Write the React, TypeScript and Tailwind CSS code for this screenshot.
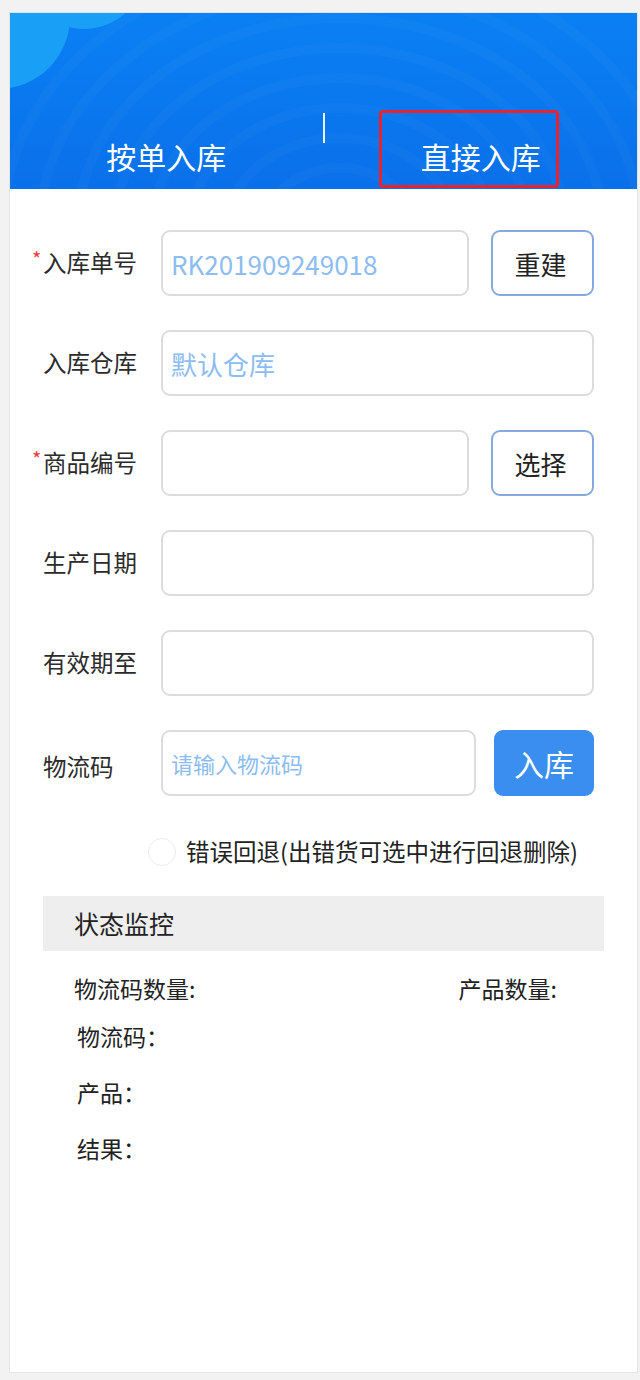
import React from "react";

const font = { fontFamily: '"Noto Sans CJK SC", "Noto Sans", sans-serif' };

type Row = {
  label: string;
  required?: boolean;
  value?: string;
  placeholder?: string;
  button?: string;
};

const rows: Row[] = [
  { label: "入库单号", required: true, value: "RK201909249018", button: "重建" },
  { label: "入库仓库", value: "默认仓库" },
  { label: "商品编号", required: true, button: "选择" },
  { label: "生产日期" },
  { label: "有效期至" },
];

function HeaderArt() {
  return (
    <svg className="absolute inset-0 h-full w-full" viewBox="0 0 627 176" preserveAspectRatio="none" aria-hidden>
      <defs>
        <linearGradient id="hdr" x1="0" y1="0" x2="0" y2="1">
          <stop offset="0" stopColor="#0a80f3" />
          <stop offset="1" stopColor="#0a70ea" />
        </linearGradient>
      </defs>
      <rect width="627" height="176" fill="url(#hdr)" />
      {[60, 90, 120, 150, 180, 210, 240, 270].map((r) => (
        <ellipse
          key={r}
          cx="330"
          cy="215"
          rx={r * 1.25}
          ry={r}
          fill="none"
          stroke="#ffffff"
          strokeOpacity="0.025"
          strokeWidth="10"
        />
      ))}
      <circle cx="-12" cy="4" r="72" fill="#1a9ff7" />
      <circle cx="74" cy="-46" r="62" fill="#1a9ff7" />
    </svg>
  );
}

export default function App() {
  return (
    <div className="min-h-screen bg-[#f2f2f2] pb-[7px] pl-[9px] pt-[12px]" style={font}>
      <div className="flex h-[1361px] w-[629px] flex-col border border-[#e4e4e4] bg-white">
        <header className="relative h-[176px] shrink-0 overflow-hidden">
          <HeaderArt />
          <div className="absolute left-[313px] top-[100px] h-[30px] w-[2px] bg-white/90" />
          <div className="relative flex h-full items-end pb-[10px] text-[30px] text-white">
            <div className="flex-1 text-center">按单入库</div>
            <div className="flex-1 pl-[2px] text-center">直接入库</div>
          </div>
          <div className="absolute left-[369px] top-[97px] h-[78px] w-[180px] rounded-[4px] border-[3px] border-[#e8232f]" />
        </header>

        <div className="flex flex-col pl-[33px] pr-[43px] pt-[41px]">
          {rows.map((row, i) => (
            <div key={row.label} className={`flex h-[66px] items-center ${i > 0 ? "mt-[34px]" : ""}`}>
              <div className="flex w-[118px] shrink-0 items-center text-[23.5px] text-[#2b2b2b]">
                {row.required && (
                  <span className="-ml-[11px] mb-[8px] w-[11px] text-[20px] leading-none text-[#ee3b3b]">*</span>
                )}
                {row.label}
              </div>
              <div className="flex h-full flex-1 items-center rounded-[9px] border-2 border-[#dcdcdc] px-[8px] text-[26px] text-[#8dbcf2]">
                {row.value ?? row.placeholder}
              </div>
              {row.button && (
                <button
                  type="button"
                  className="ml-[22px] h-full w-[103px] shrink-0 rounded-[9px] border-2 border-[#86a9dc] pr-[4px] text-[26px] text-[#222]"
                >
                  {row.button}
                </button>
              )}
            </div>
          ))}

          <div className="mt-[34px] flex h-[66px] items-center">
            <div className="w-[118px] shrink-0 pt-[8px] text-[23.5px] text-[#2b2b2b]">物流码</div>
            <div className="flex h-full flex-1 items-center rounded-[9px] border-2 border-[#dcdcdc] px-[8px] text-[22px] text-[#8dbcf2]">
              请输入物流码
            </div>
            <button
              type="button"
              className="ml-[18px] h-full w-[100px] shrink-0 rounded-[9px] bg-[#3a8ef0] text-[30px] text-white"
            >
              入库
            </button>
          </div>

          <label className="mt-[42px] flex h-[28px] items-center pl-[105px]">
            <span className="h-[28px] w-[28px] shrink-0 rounded-full border border-[#ececec] bg-white" />
            <span className="ml-[10px] whitespace-nowrap text-[23.5px] text-[#222]">错误回退(出错货可选中进行回退删除)</span>
          </label>
        </div>

        <div className="mx-[33px] mt-[30px] flex h-[55px] items-center bg-[#eeeeee] pl-[31px] text-[25px] text-[#222]">
          状态监控
        </div>

        <div className="flex flex-col pl-[64px] pr-[80px] text-[23px] text-[#222]">
          <div className="mt-[21px] flex h-[32px] items-center justify-between">
            <span>物流码数量:</span>
            <span>产品数量:</span>
          </div>
          <div className="mt-[16px] flex h-[32px] items-center pl-[3px]">物流码：</div>
          <div className="mt-[24px] flex h-[32px] items-center pl-[3px]">产品：</div>
          <div className="mt-[24px] flex h-[32px] items-center pl-[3px]">结果：</div>
        </div>
      </div>
    </div>
  );
}
